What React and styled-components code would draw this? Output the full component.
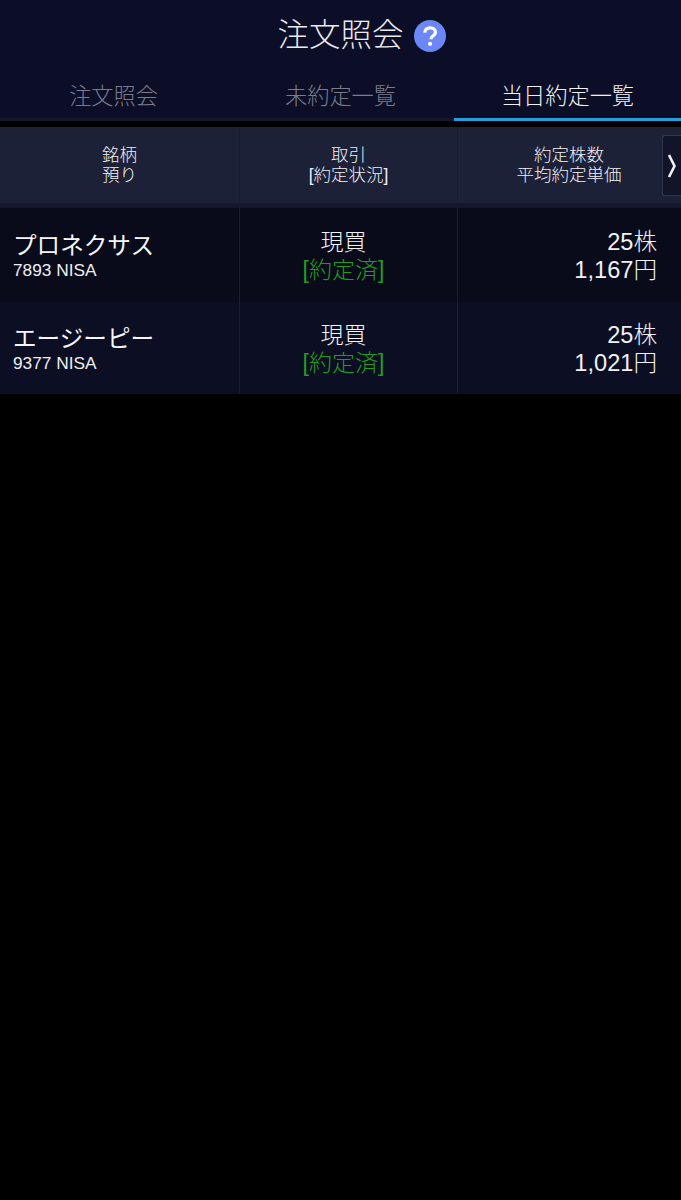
import React from "react"
import styled, { createGlobalStyle } from "styled-components"

const GlobalStyle = createGlobalStyle`
  html, body {
    margin: 0;
    background: #000;
  }
  body {
    font-family: "Liberation Sans", "Noto Sans CJK JP", sans-serif;
    color: #f4f4f6;
  }
`

const Page = styled.div`
  width: 681px;
  height: 1200px;
  background: #000;
  overflow: hidden;
`

const Header = styled.header`
  background: #0b0e26;
  height: 121px;
`

const TitleRow = styled.div`
  height: 71px;
  display: flex;
  align-items: center;
  justify-content: center;
  gap: 10px;
  padding-left: 42px;
`

const Title = styled.h1`
  margin: 0;
  font-size: 31.5px;
  font-weight: 300;
  line-height: 1;
  color: #e9e9ee;
`

const HelpIcon = styled.svg`
  width: 32px;
  height: 32px;
  display: block;
`

const Tabs = styled.nav`
  height: 50px;
  display: grid;
  grid-template-columns: 227px 227px 227px;
  background: linear-gradient(#0b0e26 47px, #15172d 47px);
`

const Tab = styled.div`
  height: 50px;
  box-sizing: border-box;
  padding-bottom: 1px;
  display: flex;
  align-items: center;
  justify-content: center;
  font-size: 22.2px;
  font-weight: 300;
  color: ${(p) => (p.$active ? "#f1f1f4" : "#7a7c8e")};
  border-bottom: 3px solid ${(p) => (p.$active ? "#259fdc" : "transparent")};
`

const Table = styled.section`
  margin-top: 6px;
  position: relative;
`

const HeadRow = styled.div`
  display: grid;
  grid-template-columns: 240px 218px 223px;
  height: 81px;
  background: linear-gradient(#1d2138 76px, #14172d 76px);
`

const HeadCell = styled.div`
  height: 100%;
  box-sizing: border-box;
  padding-bottom: 5px;
  display: flex;
  align-items: center;
  justify-content: center;
  text-align: center;
  font-size: 17.5px;
  font-weight: 300;
  line-height: 20.5px;
  color: #f0f0f4;
  border-right: 1px solid ${(p) => (p.$last ? "transparent" : "#171a30")};
`

const ScrollButton = styled.div`
  position: absolute;
  top: 8px;
  right: 0;
  width: 19px;
  height: 61px;
  box-sizing: border-box;
  border: 1px solid #34374c;
  border-right: 0;
  border-radius: 3px 0 0 3px;
  background: #12142a;
  display: flex;
  align-items: center;
  justify-content: center;
`

const Row = styled.div`
  display: grid;
  grid-template-columns: 240px 218px 223px;
  height: ${(p) => p.$height}px;
  background: ${(p) => (p.$alt ? "#0c0f23" : "#090b1b")};
`

const Cell = styled.div`
  box-sizing: border-box;
  display: flex;
  flex-direction: column;
  justify-content: center;
  border-right: 1px solid ${(p) => (p.$last ? "transparent" : "#1a1d33")};
`

const NameCell = styled(Cell)`
  padding: 3px 0 0 13px;
`

const Name = styled.div`
  font-size: 23.6px;
  font-weight: 400;
  line-height: 28px;
  color: #f6f6f8;
`

const Code = styled.div`
  font-size: 17.3px;
  line-height: 21px;
  color: #eeeef1;
`

const TradeCell = styled(Cell)`
  align-items: center;
  padding: 2px 10px 0 0;
  font-size: 23px;
  font-weight: 300;
  line-height: 28px;
`

const Status = styled.div`
  color: #249b20;
`

const AmountCell = styled(Cell)`
  align-items: flex-end;
  padding: 2px 23px 0 0;
  font-size: 23.6px;
  font-weight: 300;
  line-height: 28px;
  color: #f1f1f4;
`

const executions = [
  { name: "プロネクサス", code: "7893 NISA", shares: "25株", price: "1,167円", height: 94 },
  { name: "エージーピー", code: "9377 NISA", shares: "25株", price: "1,021円", height: 92, alt: true },
]

export default function App() {
  return (
    <Page>
      <GlobalStyle />
      <Header>
        <TitleRow>
          <Title>注文照会</Title>
          <HelpIcon viewBox="0 0 32 32">
            <circle cx="16" cy="16" r="16" fill="#6b87f8" />
            <path d="M10.8 12.6c.2-3 2.3-4.8 5.4-4.8 3 0 5.2 1.7 5.2 4.3 0 1.9-1 3-2.6 4-1.3.8-1.7 1.4-1.7 2.6v.6" fill="none" stroke="#fff" strokeWidth="3.2" />
            <circle cx="16.1" cy="23.8" r="2.1" fill="#fff" />
          </HelpIcon>
        </TitleRow>
        <Tabs>
          <Tab>注文照会</Tab>
          <Tab>未約定一覧</Tab>
          <Tab $active>当日約定一覧</Tab>
        </Tabs>
      </Header>
      <Table>
        <HeadRow>
          <HeadCell>銘柄<br />預り</HeadCell>
          <HeadCell>取引<br />[約定状況]</HeadCell>
          <HeadCell $last>約定株数<br />平均約定単価</HeadCell>
        </HeadRow>
        <ScrollButton>
          <svg width="10" height="26" viewBox="0 0 10 26">
            <path d="M2 2l5.5 11L2 24" fill="none" stroke="#f2f2f5" strokeWidth="2.6" />
          </svg>
        </ScrollButton>
        {executions.map((item) => (
          <Row key={item.code} $alt={item.alt} $height={item.height}>
            <NameCell>
              <Name>{item.name}</Name>
              <Code>{item.code}</Code>
            </NameCell>
            <TradeCell>
              <div>現買</div>
              <Status>[約定済]</Status>
            </TradeCell>
            <AmountCell $last>
              <div>{item.shares}</div>
              <div>{item.price}</div>
            </AmountCell>
          </Row>
        ))}
      </Table>
    </Page>
  )
}
